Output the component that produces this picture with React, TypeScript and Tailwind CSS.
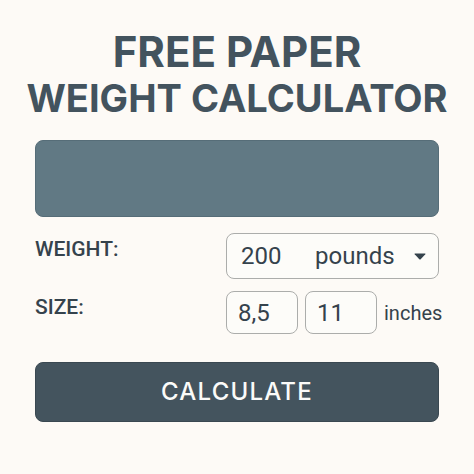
import type React from "react"

import { useState } from "react"

const fieldClass =
  "rounded-lg border border-[#acadab] bg-[#fdfcf9] font-['Roboto',sans-serif] text-2xl text-[#35424c] focus:border-[#617984] focus:outline-none"

interface SizeInputProps {
  label: string
  value: string
  onChange: (value: string) => void
}

function SizeInput({ label, value, onChange }: SizeInputProps) {
  return (
    <input
      type="text"
      inputMode="decimal"
      aria-label={label}
      value={value}
      onChange={(e) => onChange(e.target.value)}
      className={`${fieldClass} h-[43px] w-18 px-[11px]`}
    />
  )
}

export default function App() {
  const [weight, setWeight] = useState("200")
  const [unit, setUnit] = useState("pounds")
  const [width, setWidth] = useState("8,5")
  const [height, setHeight] = useState("11")

  const handleSubmit = (e: React.FormEvent) => {
    e.preventDefault()
  }

  return (
    <main className="min-h-screen bg-[#fdfaf6] pt-7 pb-12 font-['Inter',sans-serif] text-[#43535e]">
      <h1 className="text-center font-bold whitespace-nowrap">
        <span className="block text-[42px] leading-12">FREE PAPER</span>
        <span className="block text-[38px] leading-11">WEIGHT CALCULATOR</span>
      </h1>

      <form onSubmit={handleSubmit} className="px-[35px] pt-5">
        <output className="block h-[77px] rounded-lg border border-[#566d78] bg-[#617984]" />

        <div className="mt-4 flex items-start justify-between">
          <label
            htmlFor="weight"
            className="pt-0.5 font-['Roboto',sans-serif] text-[21px] leading-7 font-medium text-[#35424c]"
          >
            WEIGHT:
          </label>
          <div className={`${fieldClass} flex h-[46px] w-[213px] items-center pr-3 pl-3.5`}>
            <input
              id="weight"
              type="text"
              inputMode="numeric"
              value={weight}
              onChange={(e) => setWeight(e.target.value)}
              className="w-[74px] bg-transparent focus:outline-none"
            />
            <div className="relative flex flex-1 items-center">
              <select
                aria-label="Weight unit"
                value={unit}
                onChange={(e) => setUnit(e.target.value)}
                className="w-full appearance-none bg-transparent focus:outline-none"
              >
                <option value="pounds">pounds</option>
                <option value="grams">grams</option>
              </select>
              <svg viewBox="0 0 12 7" className="pointer-events-none absolute right-0 h-[7px] w-3 fill-[#35424c]">
                <path d="M1 0.5h10q0.9 0 0.3 0.7L6.7 6.2q-0.7 0.7-1.4 0L0.7 1.2Q0.1 0.5 1 0.5z" />
              </svg>
            </div>
          </div>
        </div>

        <div className="mt-3 flex items-start justify-between">
          <span className="pt-0.5 font-['Roboto',sans-serif] text-[21px] leading-7 font-medium text-[#35424c]">
            SIZE:
          </span>
          <div className="flex w-[213px] items-center gap-[7px]">
            <SizeInput label="Width in inches" value={width} onChange={setWidth} />
            <SizeInput label="Height in inches" value={height} onChange={setHeight} />
            <span className="font-['Roboto',sans-serif] text-xl text-[#35424c]">inches</span>
          </div>
        </div>

        <button
          type="submit"
          className="mt-7 h-15 w-full rounded-lg border border-[#3a4851] bg-[#44545e] text-2xl font-medium tracking-wider text-[#fbfbf9]"
        >
          CALCULATE
        </button>
      </form>
    </main>
  )
}
